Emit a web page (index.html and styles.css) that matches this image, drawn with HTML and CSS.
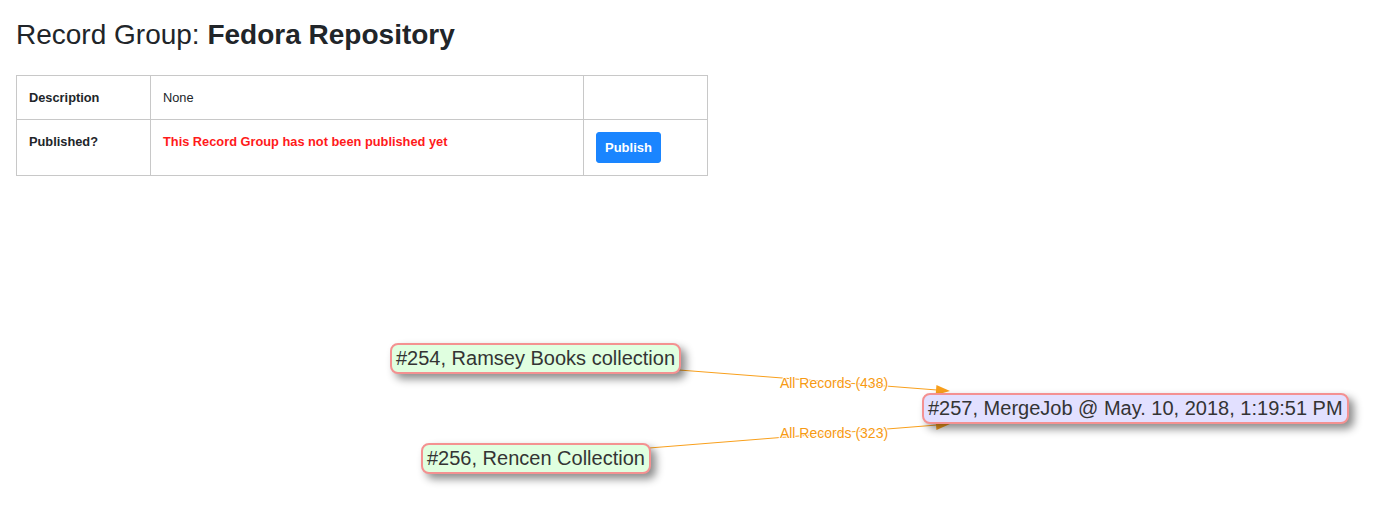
FILE: index.html
```html
<!DOCTYPE html>
<html lang="en">
<head>
<meta charset="utf-8">
<title>Record Group: Fedora Repository</title>
<link rel="stylesheet" href="styles.css">
</head>
<body>
<div class="page">
  <h3 class="title">Record Group: <strong>Fedora Repository</strong></h3>
  <table class="info">
    <colgroup>
      <col class="c1"><col class="c2"><col class="c3">
    </colgroup>
    <tr>
      <td class="label">Description</td>
      <td>None</td>
      <td></td>
    </tr>
    <tr>
      <td class="label">Published?</td>
      <td class="danger">This Record Group has not been published yet</td>
      <td><button class="btn">Publish</button></td>
    </tr>
  </table>
</div>
<div class="graph">
  <svg class="edges" width="1383" height="331" viewBox="0 0 1383 331">
    <line x1="679" y1="194" x2="937" y2="214" class="edge"/>
    <polygon points="950,215 935.65,218.9 936.43,208.93" class="arrow"/>
    <line x1="649" y1="272" x2="937" y2="249" class="edge"/>
    <polygon points="950,248 936.44,254.09 935.64,244.13" class="arrow"/>
    <text x="834" y="207" class="elabel">All Records (438)</text>
    <text x="834" y="257" class="elabel">All Records (323)</text>
  </svg>
  <div class="node src n1">#254, Ramsey Books collection</div>
  <div class="node src n2">#256, Rencen Collection</div>
  <div class="node job n3">#257, MergeJob @ May. 10, 2018, 1:19:51 PM</div>
</div>
</body>
</html>
```
FILE: styles.css
```css
html, body {
  margin: 0;
  padding: 0;
  background: #ffffff;
}
body {
  font-family: "Liberation Sans", Arial, sans-serif;
  color: #212529;
}
.page {
  padding: 18px 16px 0;
}
.title {
  margin: 0 0 23px;
  font-size: 28px;
  font-weight: 400;
  line-height: 1.2;
}
.title strong {
  font-weight: 700;
}
.info {
  border-collapse: collapse;
  table-layout: fixed;
  width: 691px;
  font-size: 12.8px;
  line-height: 1.5;
}
.info col.c1 { width: 134px; }
.info col.c2 { width: 433px; }
.info col.c3 { width: 124px; }
.info td {
  border: 1px solid #c8c8c8;
  padding: 12px;
  vertical-align: top;
}
.info td.label {
  font-weight: 700;
}
.info td.danger {
  color: #ff1a1a;
  font-weight: 700;
}
.btn {
  display: inline-block;
  font-family: "Liberation Sans", Arial, sans-serif;
  font-size: 13px;
  font-weight: 700;
  line-height: 19px;
  color: #ffffff;
  background: #1a85ff;
  border: 1px solid #1a85ff;
  border-radius: 3px;
  padding: 5px 8px;
  margin: 0;
}
.graph {
  position: relative;
  height: 331px;
}
.edges {
  position: absolute;
  left: 0;
  top: 0;
}
.edge {
  stroke: #f9a01c;
  stroke-width: 1;
}
.arrow {
  fill: #f9a01c;
}
.elabel {
  font-family: "Liberation Sans", Arial, sans-serif;
  font-size: 14px;
  fill: #f79a12;
  stroke: #ffffff;
  stroke-width: 2px;
  paint-order: stroke;
  text-anchor: middle;
  dominant-baseline: central;
}
.node {
  position: absolute;
  font-family: "Liberation Sans", Arial, sans-serif;
  font-size: 20px;
  line-height: 19px;
  color: #343434;
  border: 2px solid #f49191;
  border-radius: 8px;
  padding: 4px 4px;
  white-space: nowrap;
  box-shadow: 5px 5px 9px rgba(0, 0, 0, 0.45);
}
.node.src {
  background: #e0ffe0;
}
.node.job {
  background: #e2e0ff;
}
.n1 { left: 390px; top: 167px; }
.n2 { left: 421px; top: 267px; }
.n3 { left: 922px; top: 217px; }
```
